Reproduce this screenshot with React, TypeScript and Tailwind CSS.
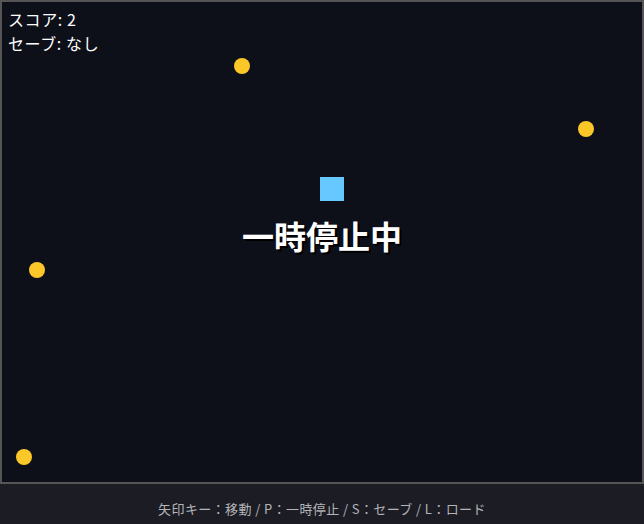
import React from 'react';

const coins = [
  { x: 242, y: 66 },
  { x: 586, y: 129 },
  { x: 37, y: 270 },
  { x: 24, y: 457 },
];

const App: React.FC = () => {
  return (
    <div
      className="w-[644px] h-[524px] bg-[#1c1d24] flex flex-col"
      style={{ fontFamily: '"Noto Sans CJK JP", "Noto Sans", sans-serif' }}
    >
      {/* game canvas */}
      <div className="relative w-[644px] h-[484px] border-2 border-[#555] bg-[#0e1019] overflow-hidden">
        <div className="absolute left-[6px] top-[5px] text-white text-[16px] leading-[24px] tracking-[0.6px]">
          <div>スコア: 2</div>
          <div>セーブ: なし</div>
        </div>

        {coins.map((c, i) => (
          <div
            key={i}
            className="absolute w-4 h-4 rounded-full bg-[#fcc829]"
            style={{ left: c.x - 10, top: c.y - 10 }}
          />
        ))}

        <div className="absolute left-[318px] top-[175px] w-6 h-6 bg-[#66c8ff]" />

        <div className="absolute left-0 right-0 top-[213px] text-center text-white font-bold text-[32px] leading-[40px] [text-shadow:2px_2px_0_#000]">
          一時停止中
        </div>
      </div>

      {/* controls */}
      <div className="flex-1 flex items-center justify-center text-[13px] text-[#b4b4b8] pt-[9px] tracking-[0.4px]">
        矢印キー：移動 / P：一時停止 / S：セーブ / L：ロード
      </div>
    </div>
  );
};

export default App;
